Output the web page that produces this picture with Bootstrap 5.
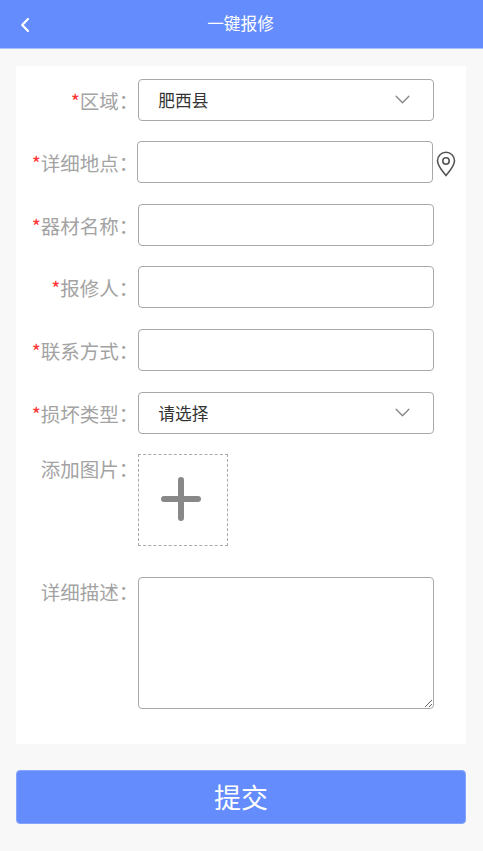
<!DOCTYPE html>
<html lang="zh">
<head>
<meta charset="utf-8">
<title>一键报修</title>
<link rel="stylesheet" href="https://cdn.jsdelivr.net/npm/bootstrap@5.3.0/dist/css/bootstrap.min.css">
<style>
html,body{height:100%}
body{background:#f8f8f8;font-family:"Noto Sans CJK SC","Liberation Sans",sans-serif;overflow:hidden}
.top-bar{height:48.7px;background:#648cfc;color:#fff;font-size:16.7px;border-bottom:1px solid #a9c0fb;padding-right:2px}
.top-back{left:18.5px;top:15.5px;line-height:0}
.sheet{margin:17px 0 0 16.3px;width:449.4px;height:678.2px;background:#fff;padding-top:13px}
.field-row{height:42px;margin-bottom:20.6px}
.field-label{width:122px;flex:none;padding-right:0;text-align:right;font-size:19.5px;color:#a3a3a3;line-height:43.5px;white-space:nowrap;height:42px}
.req{color:#f33}
.field-box{width:295.4px;height:42px;flex:none;border:1px solid #a8a8a8;border-radius:4px;font-size:16.7px;color:#333;padding:1px 19px 0;box-shadow:none;font-family:inherit;background-color:#fff}
select.field-box{background-image:url("data:image/svg+xml,%3csvg xmlns='http://www.w3.org/2000/svg' viewBox='0 0 16 10'%3e%3cpath fill='none' stroke='%23888' stroke-width='1.3' stroke-linecap='round' stroke-linejoin='round' d='M2 2l6 6 6-6'/%3e%3c/svg%3e");background-position:right 22px center;background-size:17px 11px;padding-top:1px;padding-bottom:0}
.pin{margin-left:3px;margin-top:10px}
.shift-left{margin-left:-1px}
.picker-row{height:91.7px;margin-bottom:31px}
.picker-row .field-label{line-height:29.5px}
.picker{width:89.4px;height:91.7px;border:1px dashed #aaa;flex:none;padding:0 4px 2px 0}
.area-row{height:132.5px}
.area-row .field-label{line-height:29.5px}
textarea.field-box{height:132.5px;padding:8px}
.submit-btn{display:block;width:449.4px;margin:26.4px 0 0 16.3px;height:53.3px;background:#648cfc;border:1px solid #86a5fc;border-radius:4px;color:#fff;font-size:27px;line-height:1.5;padding:1px 0 0}
</style>
</head>
<body>
<header class="top-bar position-relative d-flex align-items-center justify-content-center">
  <a class="top-back position-absolute" href="#" aria-label="返回"><svg width="12" height="18" viewBox="0 0 12 18" fill="none" stroke="#fff" stroke-width="2.200" stroke-linecap="round" stroke-linejoin="round"><path d="M9 3 3.200 9 9 15"/></svg></a>
  <span>一键报修</span>
</header>
<form class="sheet">
  <div class="field-row d-flex">
    <label class="field-label"><span class="req">*</span>区域：</label>
    <select class="form-select field-box"><option>肥西县</option></select>
  </div>
  <div class="field-row d-flex">
    <label class="field-label"><span class="req">*</span>详细地点：</label>
    <input class="form-control field-box shift-left" type="text">
    <svg class="pin" width="20" height="26" viewBox="0 0 20 26" fill="none" stroke="#555" stroke-width="1.6"><path d="M10 24.5C6 19.5 1.500 15 1.500 9.800a8.500 8.500 0 0 1 17 0C18.500 15 14 19.500 10 24.500Z"/><circle cx="10" cy="10" r="3.200"/></svg>
  </div>
  <div class="field-row d-flex">
    <label class="field-label"><span class="req">*</span>器材名称：</label>
    <input class="form-control field-box" type="text">
  </div>
  <div class="field-row d-flex">
    <label class="field-label"><span class="req">*</span>报修人：</label>
    <input class="form-control field-box" type="text">
  </div>
  <div class="field-row d-flex">
    <label class="field-label"><span class="req">*</span>联系方式：</label>
    <input class="form-control field-box" type="text">
  </div>
  <div class="field-row d-flex">
    <label class="field-label"><span class="req">*</span>损坏类型：</label>
    <select class="form-select field-box"><option>请选择</option></select>
  </div>
  <div class="picker-row d-flex">
    <label class="field-label">添加图片：</label>
    <div class="picker d-flex align-items-center justify-content-center">
      <svg width="40" height="44" viewBox="0 0 40 44" fill="none" stroke="#888" stroke-width="6" stroke-linecap="round"><path d="M20 3v38M3 22h34"/></svg>
    </div>
  </div>
  <div class="area-row d-flex">
    <label class="field-label">详细描述：</label>
    <textarea class="form-control field-box"></textarea>
  </div>
</form>
<button class="btn submit-btn" type="button">提交</button>
<script src="https://cdn.jsdelivr.net/npm/bootstrap@5.3.0/dist/js/bootstrap.bundle.min.js"></script>
</body>
</html>
